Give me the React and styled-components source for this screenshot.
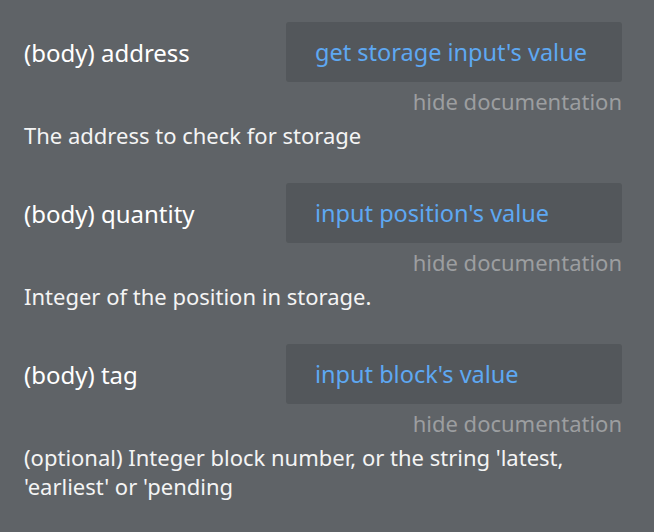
import React from "react";
import styled, { createGlobalStyle } from "styled-components";

const Global = createGlobalStyle`
  html, body { margin: 0; padding: 0; background: #5f6367; }
  body { font-family: "Noto Sans", "Open Sans", sans-serif; }
`;

const Page = styled.div`
  width: 654px;
  height: 532px;
  box-sizing: border-box;
  padding: 22px 32px 0 24px;
  background: #5f6367;
  display: flex;
  flex-direction: column;
`;

const Field = styled.section`
  display: flex;
  flex-direction: column;
  margin-bottom: 33px;
`;

const Row = styled.div`
  display: flex;
  align-items: center;
  justify-content: space-between;
  height: 60px;
`;

const Label = styled.div`
  color: #ffffff;
  font-size: 24px;
`;

const ValueBox = styled.div`
  width: 336px;
  height: 60px;
  box-sizing: border-box;
  background: #53575b;
  border-radius: 3px;
  padding-left: 29px;
  display: flex;
  align-items: center;
  color: #5ea8f2;
  font-size: 23.5px;
`;

const HideDoc = styled.div`
  align-self: flex-end;
  color: #9c9ea0;
  font-size: 22px;
  height: 39px;
  line-height: 39px;
`;

const Desc = styled.div`
  color: #f4f4f4;
  font-size: 22px;
  line-height: 29px;
`;

const fields = [
  { label: "(body) address", value: "get storage input's value", desc: "The address to check for storage" },
  { label: "(body) quantity", value: "input position's value", desc: "Integer of the position in storage." },
  { label: "(body) tag", value: "input block's value", desc: "(optional) Integer block number, or the string 'latest, 'earliest' or 'pending" },
];

export default function App() {
  return (
    <>
      <Global />
      <Page>
        {fields.map((f) => (
          <Field key={f.label}>
            <Row>
              <Label>{f.label}</Label>
              <ValueBox>{f.value}</ValueBox>
            </Row>
            <HideDoc>hide documentation</HideDoc>
            <Desc>{f.desc}</Desc>
          </Field>
        ))}
      </Page>
    </>
  );
}
